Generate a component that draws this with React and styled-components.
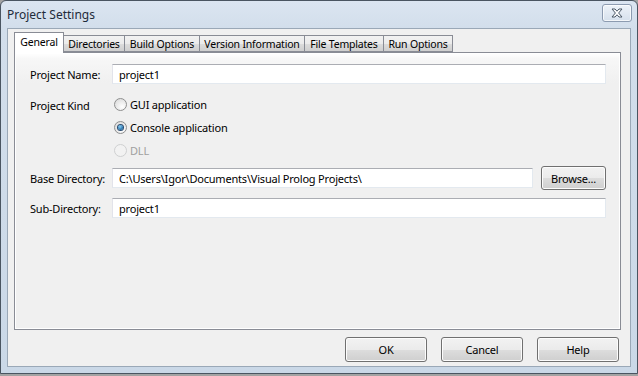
import React from 'react';
import styled, {createGlobalStyle} from 'styled-components';

const GlobalStyle = createGlobalStyle`
  html, body {
    margin: 0;
    padding: 0;
    background: #a3a3a3;
  }
  body {
    font-family: "Noto Sans", "Open Sans", sans-serif;
    font-size: 11px;
    letter-spacing: -0.2px;
    color: #000;
  }
`

const Screen = styled.div`
  width: 638px;
  height: 376px;
  overflow: hidden;
  background: #a3a3a3;
`
const Frame = styled.div`
  box-sizing: border-box;
  width: 638px;
  height: 374px;
  display: flex;
  flex-direction: column;
  border: 1px solid #4a5561;
  border-radius: 6px 6px 0 0;
  background: linear-gradient(180deg, #dbe5f1 0px, #d2deeb 28px, #cad8e7 100%);
  padding: 0 6px 6px 6px;
`
const TitleBar = styled.div`
  height: 27px;
  display: flex;
  align-items: center;
  justify-content: space-between;
`
const Title = styled.div`
  font-size: 12px;
  letter-spacing: 0;
  color: #1e2b3a;
`
const CloseButton = styled.div`
  box-sizing: border-box;
  width: 30px;
  height: 18px;
  margin-top: -4px;
  margin-right: -1px;
  border: 1px solid #8c9bb0;
  border-radius: 3px;
  background: linear-gradient(180deg, #eef3f9, #d6e0ec);
  box-shadow: inset 0 0 0 1px rgba(255,255,255,0.7);
  display: flex;
  align-items: center;
  justify-content: center;
`
const Client = styled.div`
  flex: 1;
  display: flex;
  flex-direction: column;
  background: #f0f0f0;
  border: 1px solid #9aa8b7;
  padding: 3px 9px 0 6px;
`
const TabStrip = styled.div`
  display: flex;
  align-items: flex-end;
  height: 20px;
  position: relative;
  z-index: 1;
`
const Tab = styled.div`
  box-sizing: border-box;
  width: ${p => p.$w}px;
  height: ${p => (p.$active ? 21 : 17)}px;
  margin-left: ${p => (p.$first ? 0 : -1)}px;
  margin-bottom: ${p => (p.$active ? -1 : 0)}px;
  display: flex;
  align-items: center;
  justify-content: center;
  padding-bottom: ${p => (p.$active ? 2 : 0)}px;
  border: 1px solid #898c95;
  border-bottom: ${p => (p.$active ? 'none' : '1px solid #898c95')};
  background: ${p => (p.$active ? '#ffffff' : 'linear-gradient(180deg, #f2f2f2 0%, #ebebeb 50%, #dddddd 51%, #cfcfcf 100%)')};
  position: relative;
  z-index: ${p => (p.$active ? 2 : 1)};
  white-space: nowrap;
  font-size: 10.5px;
`
const Panel = styled.div`
  box-sizing: border-box;
  height: 278px;
  border: 1px solid #898c95;
  background: linear-gradient(180deg, #ffffff 0px, #f7f7f7 6px, #f0f0f0 30px);
  box-shadow: inset 1px 1px 0 #ffffff, inset -1px -1px 0 #ffffff;
  padding: 11px 14px 0 15px;
  display: flex;
  flex-direction: column;
`
const Row = styled.div`
  display: flex;
  align-items: ${p => (p.$top ? 'flex-start' : 'center')};
  margin-top: ${p => p.$mt || 0}px;
`
const Label = styled.div`
  width: 82px;
  flex: none;
  padding-top: ${p => p.$pt || 0}px;
`
const Field = styled.div`
  box-sizing: border-box;
  flex: 1;
  height: 20px;
  display: flex;
  align-items: center;
  padding-left: 6px;
  background: #fff;
  border: 1px solid #e3e9ef;
  border-top-color: #abadb3;
  border-left-color: #e2e3ea;
`
const RadioGroup = styled.div`
  display: flex;
  flex-direction: column;
  gap: 8px;
  padding-left: 2px;
`
const RadioItem = styled.div`
  display: flex;
  align-items: center;
  gap: 3px;
  height: 15px;
  color: ${p => (p.$disabled ? '#a0a0a0' : '#000')};
`
const RadioCircle = styled.span`
  box-sizing: border-box;
  width: 13px;
  height: 13px;
  border-radius: 50%;
  border: 1px solid ${p => (p.$disabled ? '#cfd0d1' : '#8e8f8f')};
  background: ${p => (p.$disabled ? '#f2f2f2' : 'radial-gradient(circle at 65% 70%, #ffffff 0%, #e6e6e6 60%, #d6d6d6 100%)')};
  display: flex;
  align-items: center;
  justify-content: center;
  &::after {
    content: '';
    display: ${p => (p.$checked ? 'block' : 'none')};
    width: 5px;
    height: 5px;
    border-radius: 50%;
    background: radial-gradient(circle at 40% 35%, #8ad1f5 0%, #1f6aa6 70%, #13466f 100%);
    box-shadow: 0 0 0 1px #294b70;
  }
`
const Button = styled.div`
  box-sizing: border-box;
  width: ${p => p.$w || 82}px;
  height: ${p => p.$h || 25}px;
  margin-left: ${p => p.$ml || 0}px;
  display: flex;
  align-items: center;
  justify-content: center;
  border: 1px solid #707070;
  border-radius: 3px;
  background: linear-gradient(180deg, #f2f2f2 0%, #ebebeb 50%, #dddddd 51%, #cfcfcf 100%);
  box-shadow: inset 0 0 0 1px #fcfcfc;
  flex: none;
`
const Footer = styled.div`
  display: flex;
  justify-content: flex-end;
  gap: 14px;
  margin-top: 7px;
  margin-right: 2px;
`

const tabs = [
  ['General', 50],
  ['Directories', 62],
  ['Build Options', 76],
  ['Version Information', 106],
  ['File Templates', 80],
  ['Run Options', 70],
];

const Radio = ({checked, disabled, children}) => (
  <RadioItem $disabled={disabled}>
    <RadioCircle $checked={checked} $disabled={disabled}/>
    {children}
  </RadioItem>
);

export default function App() {
  return (
    <Screen>
      <GlobalStyle/>
      <Frame>
        <TitleBar>
          <Title>Project Settings</Title>
          <CloseButton>
            <svg width="14" height="10" viewBox="0 0 14 10">
              <path d="M2 1 L5 1 L7 3.2 L9 1 L12 1 L8.6 5 L12 9 L9 9 L7 6.8 L5 9 L2 9 L5.4 5 Z"
                    fill="#ffffff" stroke="#4b5866" strokeWidth="1" strokeLinejoin="round"/>
            </svg>
          </CloseButton>
        </TitleBar>
        <Client>
          <TabStrip>
            {tabs.map(([name, w], i) => (
              <Tab key={name} $w={w} $active={i === 0} $first={i === 0}>{name}</Tab>
            ))}
          </TabStrip>
          <Panel>
            <Row>
              <Label>Project Name:</Label>
              <Field>project1</Field>
            </Row>
            <Row $top $mt={13}>
              <Label $pt={1}>Project Kind</Label>
              <RadioGroup>
                <Radio>GUI application</Radio>
                <Radio checked>Console application</Radio>
                <Radio disabled>DLL</Radio>
              </RadioGroup>
            </Row>
            <Row $mt={8}>
              <Label>Base Directory:</Label>
              <Field>C:\Users\Igor\Documents\Visual Prolog Projects\</Field>
              <Button $w={65} $h={24} $ml={8}>Browse...</Button>
            </Row>
            <Row $mt={8}>
              <Label>Sub-Directory:</Label>
              <Field>project1</Field>
            </Row>
          </Panel>
          <Footer>
            <Button>OK</Button>
            <Button>Cancel</Button>
            <Button>Help</Button>
          </Footer>
        </Client>
      </Frame>
    </Screen>
  );
}
